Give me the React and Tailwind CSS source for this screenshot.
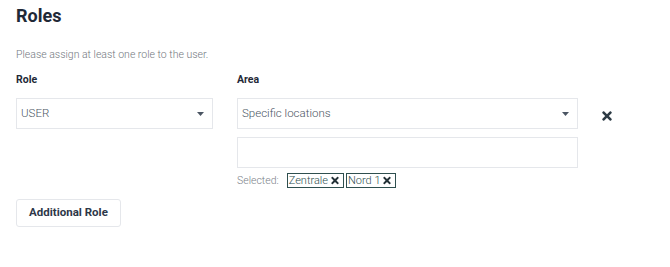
import { FaTimes } from 'react-icons/fa'

function Caret() {
    return (
        <svg width="7" height="4" viewBox="0 0 7 4" className="block">
            <path d="M0 0 L7 0 L3.5 4 Z" fill="#4b5563" />
        </svg>
    )
}

function Tag({ label }) {
    return (
        <span className="inline-flex items-center gap-[3px] h-[15px] border border-[#2f4f4f] pl-[1px] pr-[4px] text-[11px] text-[#2f4f4f] leading-none">
            {label}
            <FaTimes className="w-[8px] h-[11px] text-[#243238]" />
        </span>
    )
}

export default function App() {
    return (
        <div className="w-[670px] h-[267px] bg-white px-4 pt-[2px] font-['Roboto',sans-serif]">
            <h2 className="text-[18px] leading-[27px] font-bold text-[#1f2937]">Roles</h2>
            <p className="mt-[16px] text-[10.5px] leading-[20px] font-light text-[#737880]">
                Please assign at least one role to the user.
            </p>

            <div className="mt-[5px] flex items-start">
                <div className="w-[197px]">
                    <div className="h-[20px] text-[10.5px] leading-[20px] font-bold text-[#1f2937]">Role</div>
                    <div className="mt-[8px] h-[31px] border border-[#e5e7eb] flex items-center justify-between pl-[4px] pr-[8px] text-[11.5px] font-light text-[#4b5563]">
                        <span>USER</span>
                        <Caret />
                    </div>
                </div>

                <div className="ml-[24px] w-[341px]">
                    <div className="h-[20px] text-[10.5px] leading-[20px] font-bold text-[#1f2937]">Area</div>
                    <div className="mt-[8px] h-[31px] border border-[#e5e7eb] flex items-center justify-between pl-[4px] pr-[8px] text-[11.5px] font-light text-[#4b5563]">
                        <span>Specific locations</span>
                        <Caret />
                    </div>
                    <div className="mt-[8px] h-[31px] border border-[#e5e7eb]"></div>
                    <div className="mt-[5px] h-[15px] flex items-center gap-[2px] text-[10.5px] leading-[15px] font-light text-[#7b8088]">
                        <span className="mr-[6px]">Selected:</span>
                        <Tag label="Zentrale" />
                        <Tag label="Nord 1" />
                    </div>
                </div>

                <div className="ml-[22px] pt-[39px]">
                    <FaTimes className="w-[14px] h-[14px] text-[#2d3b45]" />
                </div>
            </div>

            <button className="mt-[11px] h-[28px] w-[105px] border border-[#e5e7eb] rounded-[3px] text-[11.5px] font-bold text-[#2d3748]">
                Additional Role
            </button>
        </div>
    )
}
